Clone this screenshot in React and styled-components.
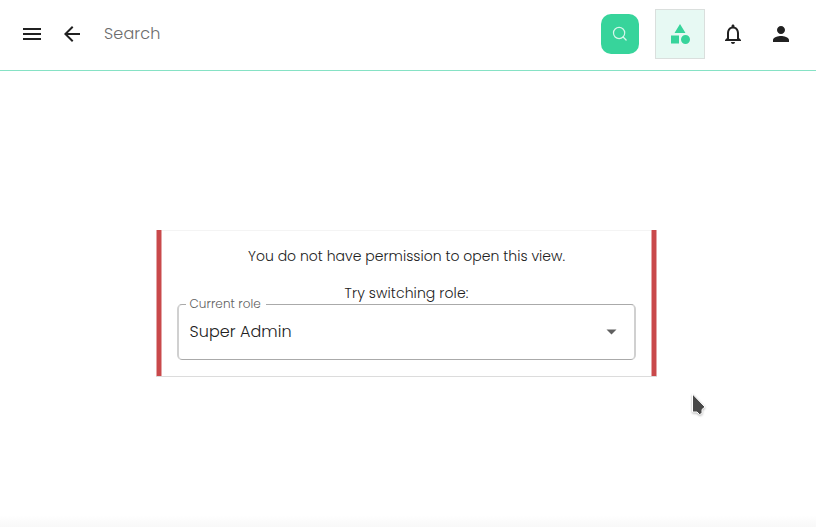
import React from "react";
import styled, { createGlobalStyle } from "styled-components";

const GlobalStyle = createGlobalStyle`
  *, *::before, *::after { box-sizing: border-box; }
  html, body { margin: 0; padding: 0; background: #fff; overflow: hidden; }
  body { font-family: Poppins, Inter, "Open Sans", sans-serif; font-weight: 300; color: #212121; }
  button, input { font: inherit; }
`;

const Page = styled.div`
  position: relative;
  display: flex;
  flex-direction: column;
  height: 527px;
  width: 816px;
  background: #fff;
`;

const TopBar = styled.header`
  display: flex;
  align-items: center;
  height: 71px;
  padding: 0 23px 3px 20px;
  border-bottom: 1px solid #86e2c5;
`;

const IconButton = styled.button`
  display: flex;
  align-items: center;
  justify-content: center;
  width: 24px;
  height: 24px;
  padding: 0;
  border: 0;
  background: none;
  color: #212121;
  margin-left: ${(p) => p.$gap || 0}px;
`;

const SearchButton = styled(IconButton)`
  width: 38px;
  height: 40px;
  border-radius: 10px;
  background: #37d49b;
  color: #d7f7eb;
`;

const RoleButton = styled(IconButton)`
  width: 50px;
  height: 50px;
  margin-left: 16px;
  border: 1px solid #dadfdd;
  background: #e7f9f3;
  color: #37d49b;
`;

const Glyph = styled.svg`
  display: block;
  flex: none;
  width: ${(p) => p.$size || 24}px;
  height: ${(p) => p.$size || 24}px;
  fill: currentColor;
`;

const SearchInput = styled.input`
  flex: 1;
  min-width: 0;
  margin-left: 20px;
  padding: 0;
  border: 0;
  outline: 0;
  background: none;
  font-size: 16px;
  line-height: 24px;
  letter-spacing: 0.15px;
  &::placeholder { color: #6c6c6c; opacity: 1; }
`;

const Content = styled.main`
  display: flex;
  flex: 1;
  flex-direction: column;
  align-items: flex-start;
  padding: 159px 0 0 156px;
`;

const Notice = styled.section`
  display: flex;
  flex-direction: column;
  align-items: center;
  width: 501px;
  height: 147px;
  padding: 1px 6px;
  background:
    linear-gradient(90deg, #e4a5a6 1px, #c9494b 1px 5px, #e4a5a6 5px) left top / 6px 146px no-repeat,
    linear-gradient(90deg, #e4a5a6 1px, #c9494b 1px 5px, #e4a5a6 5px) right top / 6px 146px no-repeat,
    linear-gradient(#f4f4f4, #f4f4f4) top / 100% 1px no-repeat,
    linear-gradient(#dcdcdc, #dcdcdc) bottom / 100% 1px no-repeat;
`;

const Message = styled.p`
  margin: ${(p) => p.$top}px 0 0;
  font-size: 14px;
  line-height: 21px;
  letter-spacing: ${(p) => p.$spacing}px;
  white-space: nowrap;
`;

const Select = styled.fieldset`
  display: flex;
  align-items: center;
  justify-content: space-between;
  width: 459px;
  height: 65px;
  margin: -9px 0 0;
  padding: 7px 10px 0 10.5px;
  min-width: 0;
  border: solid;
  border-width: 1px 2px;
  border-color: #aaa #d0d0d0;
  border-radius: 5px;
`;

const Legend = styled.legend`
  height: 18px;
  margin-left: -4px;
  padding: 0 5px 0 4px;
  color: #606060;
  font-size: 12px;
  line-height: 18px;
  letter-spacing: ${(p) => p.$spacing}px;
`;

const Value = styled.span`
  font-size: 16px;
  line-height: 24px;
  letter-spacing: 0.05px;
`;

const BottomShade = styled.div`
  height: 12px;
  background: linear-gradient(#fff, #f8f8f8);
`;

const Pointer = styled.svg`
  position: absolute;
  left: 688px;
  top: 391px;
  width: 22px;
  height: 28px;
  filter: drop-shadow(0 1px 1px rgba(0, 0, 0, 0.3));
`;

const ICONS = {
  menu: "M3 18h18v-2H3v2zm0-5h18v-2H3v2zm0-7v2h18V6H3z",
  back: "M20 11H7.83l5.59-5.59L12 4l-8 8 8 8 1.41-1.41L7.83 13H20v-2z",
  category: "M12 2l-5.5 9h11zM22 17.5a4.5 4.5 0 1 1-9 0 4.5 4.5 0 0 1 9 0zM3 13.5h8v8H3z",
  bell: "M12 22c1.1 0 2-.9 2-2h-4c0 1.1.9 2 2 2zm6-6v-5c0-3.07-1.63-5.64-4.5-6.32V4c0-.83-.67-1.5-1.5-1.5s-1.5.67-1.5 1.5v.68C7.64 5.36 6 7.92 6 11v5l-2 2v1h16v-1l-2-2zm-2 1H8v-6c0-2.48 1.51-4.5 4-4.5s4 2.02 4 4.5v6z",
  person: "M12 12c2.21 0 4-1.79 4-4s-1.79-4-4-4-4 1.79-4 4 1.79 4 4 4zm0 2c-2.67 0-8 1.34-8 4v2h16v-2c0-2.66-5.33-4-8-4z",
  caret: "M6.5 9.5l5 5 5-5z",
};

function Icon({ name }) {
  return (
    <Glyph viewBox="0 0 24 24" aria-hidden="true">
      <path d={ICONS[name]} />
    </Glyph>
  );
}

const Caret = styled.span`
  display: flex;
  color: #606060;
`;

export default function App() {
  return (
    <>
      <GlobalStyle />
      <Page>
        <TopBar>
          <IconButton aria-label="Menu"><Icon name="menu" /></IconButton>
          <IconButton $gap={16} aria-label="Back"><Icon name="back" /></IconButton>
          <SearchInput placeholder="Search" />
          <SearchButton aria-label="Run search">
            <Glyph $size={16} viewBox="0 0 16 16" aria-hidden="true">
              <circle cx="7.1" cy="7" r="5.6" fill="none" stroke="currentColor" strokeWidth="1.2" />
              <path d="M11.1 11l3 3" fill="none" stroke="currentColor" strokeWidth="1.3" strokeLinecap="round" />
            </Glyph>
          </SearchButton>
          <RoleButton aria-label="Categories"><Icon name="category" /></RoleButton>
          <IconButton $gap={16} aria-label="Notifications"><Icon name="bell" /></IconButton>
          <IconButton $gap={24} aria-label="Account"><Icon name="person" /></IconButton>
        </TopBar>
        <Content>
          <Notice>
            <Message $top={15} $spacing={0.02}>You do not have permission to open this view.</Message>
            <Message $top={16} $spacing={0.1}>Try switching role:</Message>
            <Select>
              <Legend $spacing={0.08}>Current role</Legend>
              <Value>Super Admin</Value>
              <Caret><Icon name="caret" /></Caret>
            </Select>
          </Notice>
        </Content>
        <BottomShade />
        <Pointer viewBox="0 0 22 28" aria-hidden="true">
          <path d="M4.5 3v18h4.5l2.5 2.5 2.5-1v-4l3-2.5z" fill="#484848" stroke="#fff" strokeWidth="1" />
        </Pointer>
      </Page>
    </>
  );
}
